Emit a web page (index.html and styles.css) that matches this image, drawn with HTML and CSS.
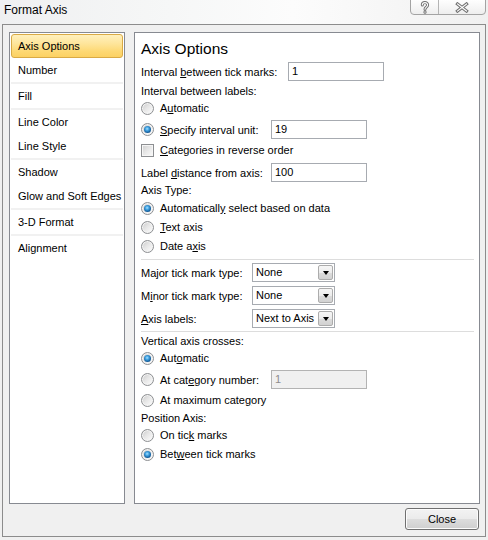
FILE: index.html
```html
<!DOCTYPE html>
<html>
<head>
<meta charset="utf-8">
<title>Format Axis</title>
<link rel="stylesheet" href="styles.css">
</head>
<body>
<div class="titlebar">
  <span class="title">Format Axis</span>
  <div class="caption">
    <span class="cbtn help">
      <svg width="10" height="13" viewBox="0 0 10 13">
        <g fill="none" stroke-linecap="round" stroke-linejoin="round">
          <path d="M2.3 4 C2.3 0.8 7.6 0.8 7.6 4 C7.6 6.2 5 6.1 5 8.3" stroke="#707070" stroke-width="3"/>
          <path d="M5 10.8 L5 11.2" stroke="#707070" stroke-width="3"/>
          <path d="M2.3 4 C2.3 0.8 7.6 0.8 7.6 4 C7.6 6.2 5 6.1 5 8.3" stroke="#fdfdfd" stroke-width="1.1"/>
          <path d="M5 10.8 L5 11.2" stroke="#fdfdfd" stroke-width="1.1"/>
        </g>
      </svg>
    </span>
    <span class="cbtn close">
      <svg width="14" height="11" viewBox="0 0 14 11">
        <g fill="none" stroke-linecap="square">
          <path d="M2.5 2 L11.5 9 M11.5 2 L2.5 9" stroke="#707070" stroke-width="3.2"/>
          <path d="M2.5 2 L11.5 9 M11.5 2 L2.5 9" stroke="#fdfdfd" stroke-width="1.2"/>
        </g>
      </svg>
    </span>
  </div>
</div>

<div class="frame">
  <div class="panels">
    <ul class="nav">
      <li class="item selected">Axis Options</li>
      <li class="item">Number</li>
      <li class="sep"></li>
      <li class="item">Fill</li>
      <li class="sep"></li>
      <li class="item">Line Color</li>
      <li class="item">Line Style</li>
      <li class="sep"></li>
      <li class="item">Shadow</li>
      <li class="item">Glow and Soft Edges</li>
      <li class="sep"></li>
      <li class="item">3-D Format</li>
      <li class="sep"></li>
      <li class="item">Alignment</li>
    </ul>

    <div class="content">
      <h1 class="heading">Axis Options</h1>

      <div class="row f mt2">
        <span class="lbl w147"><span>Interval <u>b</u>etween tick marks:</span></span>
        <span class="input">1</span>
      </div>
      <div class="row mt2"><span>Interval between labels:</span></div>
      <div class="row mt1"><span class="radio"></span><span>A<u>u</u>tomatic</span></div>
      <div class="row f mt4">
        <span class="lbl w130"><span class="radio on"></span><span><u>S</u>pecify interval unit:</span></span>
        <span class="input">19</span>
      </div>
      <div class="row mt3"><span class="check"></span><span><u>C</u>ategories in reverse order</span></div>
      <div class="row f mt5">
        <span class="lbl w130"><span>Label <u>d</u>istance from axis:</span></span>
        <span class="input">100</span>
      </div>
      <div class="row mt0"><span>Axis Type:</span></div>
      <div class="row mt2"><span class="radio on"></span><span>Automaticall<u>y</u> select based on data</span></div>
      <div class="row mt3"><span class="radio"></span><span><u>T</u>ext axis</span></div>
      <div class="row mt3"><span class="radio"></span><span>Date a<u>x</u>is</span></div>

      <div class="hr mt5"></div>

      <div class="row f mt3">
        <span class="lbl w111"><span>Ma<u>j</u>or tick mark type:</span></span>
        <span class="select"><span class="val">None</span><span class="drop"></span></span>
      </div>
      <div class="row f mt4">
        <span class="lbl w111"><span>M<u>i</u>nor tick mark type:</span></span>
        <span class="select"><span class="val">None</span><span class="drop"></span></span>
      </div>
      <div class="row f mt4">
        <span class="lbl w111"><span><u>A</u>xis labels:</span></span>
        <span class="select"><span class="val">Next to Axis</span><span class="drop"></span></span>
      </div>

      <div class="hr mt3"></div>

      <div class="row mt1"><span>Vertical axis crosses:</span></div>
      <div class="row mt1"><span class="radio on"></span><span>Aut<u>o</u>matic</span></div>
      <div class="row f mt4">
        <span class="lbl w130"><span class="radio"></span><span>At cat<u>e</u>gory number:</span></span>
        <span class="input disabled">1</span>
      </div>
      <div class="row mt3"><span class="radio"></span><span>At maximum cate<u>g</u>ory</span></div>
      <div class="row mt2"><span>Position Axis:</span></div>
      <div class="row mt1"><span class="radio"></span><span>On tic<u>k</u> marks</span></div>
      <div class="row mt3"><span class="radio on"></span><span>Bet<u>w</u>een tick marks</span></div>
    </div>
  </div>

  <div class="footer">
    <button class="btn" type="button">Close</button>
  </div>
</div>
</body>
</html>
```

FILE: styles.css
```css
* {
  box-sizing: border-box;
}

html,
body {
  margin: 0;
  padding: 0;
}

body {
  width: 488px;
  height: 540px;
  overflow: hidden;
  background: #f0f0f0;
  font-family: "Liberation Sans", Arial, sans-serif;
  font-size: 11px;
  color: #000;
}

/* ---------- title bar ---------- */
.titlebar {
  height: 24px;
  display: flex;
  align-items: flex-start;
  background: linear-gradient(90deg, #eff0f1 0%, #f6f7f7 35%, #fcfcfc 60%, #f5f5f5 85%, #f0f0f0 100%);
}

.title {
  font-size: 12px;
  line-height: 20px;
  padding-left: 4px;
}

.caption {
  margin-left: auto;
  margin-right: 2px;
  margin-top: -1px;
  height: 16px;
  display: flex;
  border: 1px solid #a3a3a3;
  border-radius: 0 0 4px 4px;
  background: linear-gradient(#fefefe, #eeeeee);
}

.cbtn {
  display: flex;
  align-items: center;
  justify-content: center;
  height: 100%;
}

.help {
  width: 28px;
  border-right: 1px solid #b4b4b4;
}

.close {
  width: 46px;
}

/* ---------- frame ---------- */
.frame {
  margin: 0 2px 3px 2px;
  height: 513px;
  border: 1px solid #8c8c8c;
  padding: 7px 5px 6px 6px;
  display: flex;
  flex-direction: column;
}

.panels {
  display: flex;
  gap: 9px;
  height: 472px;
}

/* ---------- navigation list ---------- */
.nav {
  width: 116px;
  margin: 0;
  padding: 1px;
  list-style: none;
  background: #fff;
  border: 1px solid #878a91;
}

.item {
  height: 24px;
  line-height: 22px;
  padding-left: 6px;
  border: 1px solid transparent;
  white-space: nowrap;
}

.item.selected {
  border-color: #d9aa45;
  border-radius: 3px;
  background: linear-gradient(#fff0bd 0%, #fee59a 40%, #fdd873 75%, #fcd163 100%);
}

.sep {
  height: 2px;
  background: #f1f1f1;
}

/* ---------- content panel ---------- */
.content {
  width: 346px;
  background: #fff;
  border: 1px solid #878a91;
  padding: 5px 5px 0 6px;
}

.heading {
  margin: 0;
  height: 22px;
  font-size: 15.5px;
  font-weight: normal;
  line-height: 22px;
}

.row {
  display: flex;
  align-items: center;
  height: 16px;
  white-space: nowrap;
}

.row.f {
  height: 19px;
}

.mt0 { margin-top: 0; }
.mt1 { margin-top: 1px; }
.mt2 { margin-top: 2px; }
.mt3 { margin-top: 3px; }
.mt4 { margin-top: 4px; }
.mt5 { margin-top: 5px; }

u {
  text-underline-offset: 1px;
}

.lbl {
  display: flex;
  align-items: center;
  flex: none;
}

.w147 { width: 147px; }
.w130 { width: 130px; }
.w111 { width: 111px; }

.hr {
  height: 1px;
  background: #dddddd;
}

/* radio */
.radio {
  position: relative;
  flex: none;
  width: 13px;
  height: 13px;
  margin-right: 6px;
  border-radius: 50%;
  border: 1px solid #8d8f92;
  background: linear-gradient(135deg, #c9c9c9 0%, #e6e6e6 45%, #ffffff 100%);
  box-shadow: inset 0 0 0 1px #f4f4f4;
}

.radio.on::after {
  content: "";
  position: absolute;
  left: 2px;
  top: 2px;
  width: 7px;
  height: 7px;
  border-radius: 50%;
  background: radial-gradient(circle at 45% 40%, #a8e0ff 0%, #45a6e4 30%, #15609f 65%, #0a3f75 100%);
}

/* checkbox */
.check {
  flex: none;
  width: 13px;
  height: 13px;
  margin-right: 6px;
  border: 1px solid #8d8f92;
  background: linear-gradient(135deg, #cfcfcf 0%, #e8e8e8 50%, #fbfbfb 100%);
  box-shadow: inset 0 0 0 1px #f6f6f6;
}

/* text box */
.input {
  flex: none;
  width: 96px;
  height: 19px;
  border: 1px solid #a7abb1;
  background: #fff;
  padding-left: 3px;
  line-height: 17px;
}

.input.disabled {
  background: #f0f0f0;
  border-color: #b3b3b3;
  color: #8d8d8d;
}

/* drop-down */
.select {
  flex: none;
  display: flex;
  width: 83px;
  height: 19px;
  border: 1px solid #a7abb1;
  background: #fff;
}

.val {
  flex: 1;
  padding-left: 3px;
  line-height: 17px;
  overflow: hidden;
}

.drop {
  flex: none;
  display: flex;
  align-items: center;
  justify-content: center;
  width: 15px;
  margin: 1px 1px 1px 0;
  border: 1px solid #acacac;
  border-radius: 2px;
  background: linear-gradient(#f6f6f6 0%, #ececec 50%, #dcdcdc 51%, #d2d2d2 100%);
}

.drop::after {
  content: "";
  width: 0;
  height: 0;
  border-left: 3.5px solid transparent;
  border-right: 3.5px solid transparent;
  border-top: 4px solid #000;
}

/* ---------- footer ---------- */
.footer {
  display: flex;
  justify-content: flex-end;
  margin-top: 4px;
}

.btn {
  width: 74px;
  height: 22px;
  margin: 0 1px 0 0;
  padding: 0;
  font-family: "Liberation Sans", Arial, sans-serif;
  font-size: 11px;
  color: #000;
  border: 1px solid #707070;
  border-radius: 3px;
  background: linear-gradient(#f3f3f3 0%, #ebebeb 50%, #dddddd 51%, #cfcfcf 100%);
  box-shadow: inset 0 0 0 1px #fcfcfc;
}
```
